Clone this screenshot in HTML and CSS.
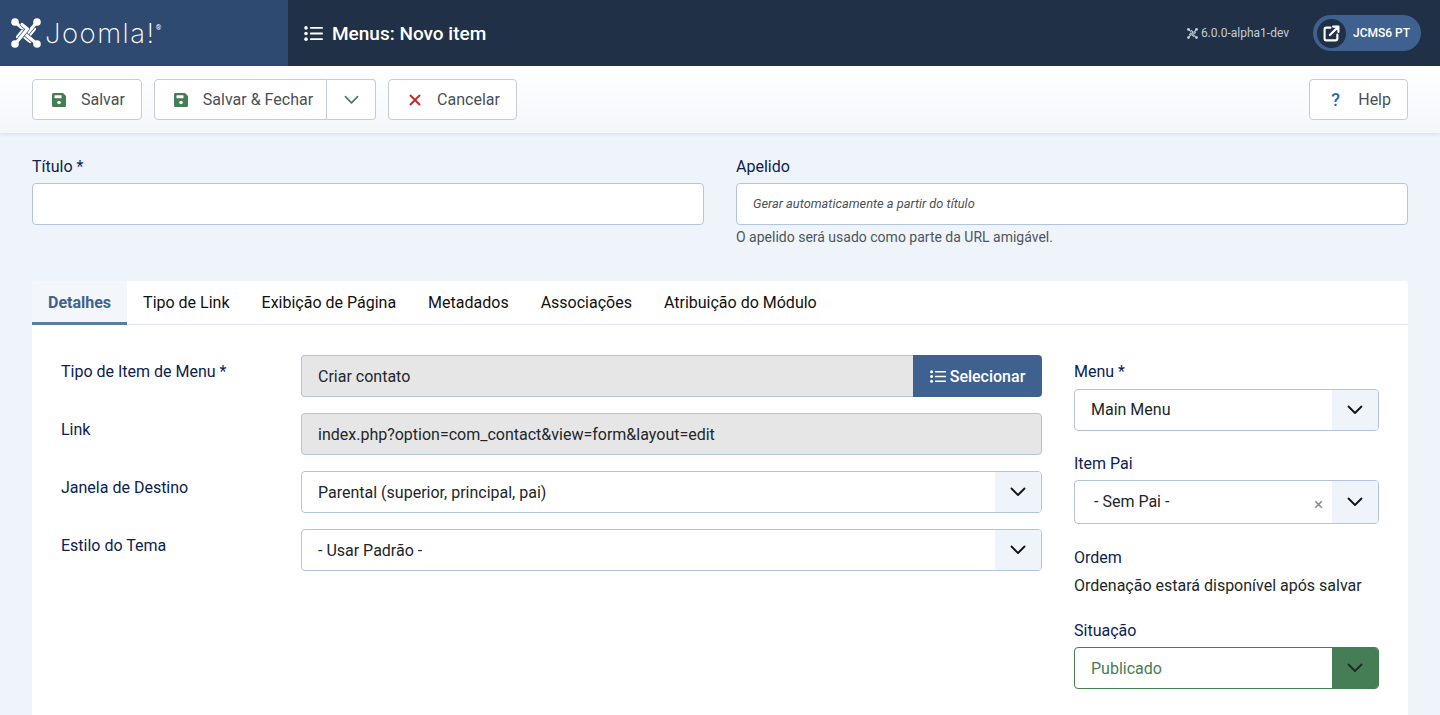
FILE: index.html
```html
<!DOCTYPE html>
<html lang="pt">
<head>
<meta charset="utf-8">
<title>Menus: Novo item</title>
<link rel="stylesheet" href="styles.css">
</head>
<body>
<svg class="defs" width="0" height="0" aria-hidden="true">
  <symbol id="i-list" viewBox="0 0 20 16"><g fill="currentColor"><circle cx="2" cy="2" r="1.9"/><circle cx="2" cy="8" r="1.9"/><circle cx="2" cy="14" r="1.9"/><rect x="6.2" y="1" width="13.8" height="2" rx=".5"/><rect x="6.2" y="7" width="13.8" height="2" rx=".5"/><rect x="6.2" y="13" width="13.8" height="2" rx=".5"/></g></symbol>
  <symbol id="i-save" viewBox="0 0 14 14"><path fill="currentColor" d="M1.6 0h8.9c.4 0 .8.2 1.1.5l1.9 1.9c.3.3.5.7.5 1.1v8.900c0 .9-.7 1.600-1.600 1.600H1.600C.7 14 0 13.300 0 12.400V1.600C0 .7.7 0 1.600 0z"/><rect x="2.500" y="2.200" width="7" height="3" rx=".4" fill="#fff"/><circle cx="7" cy="9.500" r="1.800" fill="#fff"/></symbol>
  <symbol id="i-chev" viewBox="0 0 16 10"><path d="M1.500 1.500 8 8l6.500-6.500" fill="none" stroke="currentColor" stroke-width="1.800" stroke-linecap="round" stroke-linejoin="round"/></symbol>
  <symbol id="i-joomla" viewBox="0 0 30 30">
    <g fill="none" stroke-linecap="round" stroke-linejoin="round">
      <path class="knot-gap" d="M4.500 4.500 19 16.500 23.500 11"/>
      <path class="knot-band" d="M4.500 4.500 19 16.500 23.500 11"/>
      <path class="knot-gap" d="M25.500 4.500 13.500 19 19 23.500"/>
      <path class="knot-band" d="M25.500 4.500 13.500 19 19 23.500"/>
      <path class="knot-gap" d="M25.500 25.500 11 13.500 6.500 19"/>
      <path class="knot-band" d="M25.500 25.500 11 13.500 6.500 19"/>
      <path class="knot-gap" d="M4.500 25.500 16.500 11 11 6.500"/>
      <path class="knot-band" d="M4.500 25.500 16.500 11 11 6.500"/>
    </g>
    <g fill="currentColor">
      <circle cx="4" cy="4" r="3.800"/><circle cx="26" cy="4" r="3.800"/><circle cx="26" cy="26" r="3.800"/><circle cx="4" cy="26" r="3.800"/>
    </g>
  </symbol>
</svg>

<header class="topbar">
  <div class="brand">
    <svg class="brand-icon"><use href="#i-joomla"/></svg>
    <span class="brand-word">Joomla!</span><span class="brand-reg">®</span>
  </div>
  <div class="topbar-main">
    <svg class="title-icon"><use href="#i-list"/></svg>
    <h1 class="page-title">Menus: Novo item</h1>
    <div class="version"><svg class="version-icon"><use href="#i-joomla"/></svg>6.0.0-alpha1-dev</div>
    <div class="site-pill">
      <span class="site-circle">
        <svg class="ext-icon" viewBox="0 0 16 16"><path d="M7 2.500H3.200C2.200 2.500 1.500 3.200 1.500 4.200v8.600c0 1 .7 1.700 1.700 1.700h8.600c1 0 1.700-.7 1.700-1.700V9" fill="none" stroke="currentColor" stroke-width="2" stroke-linecap="round"/><path d="M6.500 9.500 14 2M9.500 1.500h5v5" fill="none" stroke="currentColor" stroke-width="2" stroke-linecap="round" stroke-linejoin="round"/></svg>
      </span>
      <span class="site-name">JCMS6 PT</span>
    </div>
  </div>
</header>

<nav class="toolbar">
  <button class="btn"><svg class="btn-icon save"><use href="#i-save"/></svg>Salvar</button>
  <div class="btn-split">
    <button class="btn split-main"><svg class="btn-icon save"><use href="#i-save"/></svg>Salvar &amp; Fechar</button>
    <button class="btn split-toggle"><svg class="chev-green"><use href="#i-chev"/></svg></button>
  </div>
  <button class="btn"><svg class="btn-icon cancel" viewBox="0 0 12 12"><path d="M1.500 1.500l9 9M10.500 1.500l-9 9" stroke="currentColor" stroke-width="1.900" stroke-linecap="round"/></svg>Cancelar</button>
  <button class="btn help"><span class="help-mark">?</span>Help</button>
</nav>

<main class="content">
  <section class="title-row">
    <div class="title-field">
      <label class="lbl">Título *</label>
      <div class="input"></div>
    </div>
    <div class="title-field">
      <label class="lbl">Apelido</label>
      <div class="input placeholder">Gerar automaticamente a partir do título</div>
      <div class="hint">O apelido será usado como parte da URL amigável.</div>
    </div>
  </section>

  <section class="card">
    <div class="tabs">
      <div class="tab active">Detalhes</div>
      <div class="tab">Tipo de Link</div>
      <div class="tab">Exibição de Página</div>
      <div class="tab">Metadados</div>
      <div class="tab">Associações</div>
      <div class="tab">Atribuição do Módulo</div>
    </div>
    <div class="panel">
      <div class="main-col">
        <div class="row">
          <label class="row-lbl">Tipo de Item de Menu *</label>
          <div class="input-group">
            <div class="input readonly joined">Criar contato</div>
            <button class="select-btn"><svg class="select-icon"><use href="#i-list"/></svg>Selecionar</button>
          </div>
        </div>
        <div class="row">
          <label class="row-lbl">Link</label>
          <div class="input readonly grow">index.php?option=com_contact&amp;view=form&amp;layout=edit</div>
        </div>
        <div class="row">
          <label class="row-lbl">Janela de Destino</label>
          <div class="select grow">Parental (superior, principal, pai)<span class="caret"><svg class="chev"><use href="#i-chev"/></svg></span></div>
        </div>
        <div class="row">
          <label class="row-lbl">Estilo do Tema</label>
          <div class="select grow">- Usar Padrão -<span class="caret"><svg class="chev"><use href="#i-chev"/></svg></span></div>
        </div>
      </div>
      <aside class="side-col">
        <div class="side-group g-menu">
          <label class="lbl">Menu *</label>
          <div class="select">Main Menu<span class="caret"><svg class="chev"><use href="#i-chev"/></svg></span></div>
        </div>
        <div class="side-group g-parent">
          <label class="lbl">Item Pai</label>
          <div class="select fancy">- Sem Pai -<span class="clear">×</span><span class="caret"><svg class="chev"><use href="#i-chev"/></svg></span></div>
        </div>
        <div class="side-group g-order">
          <label class="lbl">Ordem</label>
          <div class="order-text">Ordenação estará disponível após salvar</div>
        </div>
        <div class="side-group g-status">
          <label class="lbl">Situação</label>
          <div class="select published">Publicado<span class="caret"><svg class="chev"><use href="#i-chev"/></svg></span></div>
        </div>
      </aside>
    </div>
  </section>
</main>
</body>
</html>
```
FILE: styles.css
```css
* { box-sizing: border-box; }
html, body { margin: 0; height: 715px; overflow: hidden; }
body { background: #eff4fb; font-family: Roboto, "Liberation Sans", sans-serif; font-size: 16px; color: #22262a; }
.defs { position: absolute; }
button { font: inherit; }

.knot-band { stroke: currentColor; stroke-width: 3.200px; }
.knot-gap { stroke: var(--knot-bg); stroke-width: 4.400px; }

.topbar { display: flex; height: 66px; background: #1f3047; color: #fff; }
.brand { width: 288px; background: #2f4a71; display: flex; align-items: center; padding-left: 11px; }
.brand-icon { width: 30px; height: 30px; color: #fff; --knot-bg: #2f4a71; }
.brand-word { font-family: Inter, sans-serif; font-weight: 200; font-size: 27.5px; margin-left: 4px; letter-spacing: 1.5px; }
.brand-reg { font-size: 7px; align-self: flex-start; margin-top: 24px; }
.topbar-main { flex: 1; display: flex; align-items: center; padding: 0 19px 0 16px; }
.title-icon { width: 19px; height: 15px; color: #fff; margin-right: 9px; }
.page-title { margin: 0; font-size: 19px; font-weight: 500; flex: 1; }
.version { font-size: 12px; color: #c4ccd6; display: flex; align-items: center; margin-right: 24px; }
.version-icon { width: 11px; height: 11px; margin-right: 3px; --knot-bg: #1f3047; }
.site-pill { width: 108px; height: 36px; border-radius: 18px; background: #3e618f; display: flex; align-items: center; padding-left: 3px; }
.site-circle { width: 29px; height: 29px; margin-left: 1px; border-radius: 50%; background: #1f3047; display: flex; align-items: center; justify-content: center; }
.ext-icon { width: 17px; height: 17px; color: #fff; }
.site-name { font-size: 12px; font-weight: 500; margin-left: 7px; }

.toolbar { height: 67px; display: flex; align-items: center; gap: 12px; padding: 0 32px; background: linear-gradient(#fff, #f4f7fb); box-shadow: 0 1px 4px rgba(30, 50, 90, .12); position: relative; }
.btn { height: 41px; background: #fff; border: 1px solid #c5ccd6; border-radius: 4px; color: #495057; display: flex; align-items: center; padding: 0 16px 0 19px; font-size: 16px; }
.btn-icon { width: 14px; height: 14px; margin-right: 15px; }
.save { color: #457d54; }
.cancel { color: #c52827; width: 12px; height: 12px; margin-left: 1px; margin-right: 16px; }
.btn-split { display: flex; }
.split-main { border-radius: 4px 0 0 4px; padding-right: 13px; }
.split-toggle { width: 49px; border-left: 0; border-radius: 0 4px 4px 0; justify-content: center; padding: 0; }
.chev-green { width: 15px; height: 10px; color: #457d54; }
.help { margin-left: auto; padding: 0 16px 0 20px; }
.help-mark { color: #2a69b8; font-weight: 500; font-size: 18px; width: 11px; margin-right: 17px; }

.content { padding: 0 32px; }
.title-row { display: grid; grid-template-columns: 672px 672px; column-gap: 32px; padding-top: 24px; height: 148px; }
.lbl { display: block; color: #0c2250; font-size: 16px; line-height: 19px; margin-bottom: 7px; }
.input { height: 42px; background: #fff; border: 1px solid #b2c4dd; border-radius: 4px; padding: 0 16px; display: flex; align-items: center; font-size: 16px; color: #22262a; }
.placeholder { font-size: 12.8px; font-style: italic; color: #4c5157; padding-bottom: 2px; }
.hint { font-size: 14px; color: #4e545a; margin-top: 4px; line-height: 17px; }

.card { background: #fff; border-radius: 4px 4px 0 0; height: 434px; }
.tabs { display: flex; height: 44px; border-bottom: 1px solid #dfe6f3; }
.tab { padding: 0 16px; line-height: 43px; height: 44px; font-size: 16px; color: #111; }
.tab.active { background: #f3f6fa; color: #3f628f; font-weight: 700; border-bottom: 3px solid #5d7ca5; border-top-left-radius: 4px; }
.panel { display: flex; padding: 30px 29px 0; }
.main-col { width: 981px; display: flex; flex-direction: column; gap: 16px; }
.row { display: flex; align-items: flex-start; }
.row-lbl { width: 240px; color: #0c2250; padding-top: 7px; line-height: 19px; }
.input-group { flex: 1; display: flex; }
.grow { flex: 1; }
.readonly { background: #e6e6e6; }
.joined { flex: 1; border-radius: 4px 0 0 4px; border-right: 0; }
.select-btn { width: 129px; height: 42px; background: #3e618f; color: #fff; border: 0; border-radius: 0 4px 4px 0; font-size: 16px; font-weight: 500; display: flex; align-items: center; justify-content: center; padding: 0; }
.select-icon { width: 16px; height: 13px; margin-right: 4px; }

.select { position: relative; height: 42px; background: #fff; border: 1px solid #b2c4dd; border-radius: 4px; padding: 0 16px; display: flex; align-items: center; font-size: 16px; color: #22262a; }
.caret { position: absolute; top: 0; right: 0; bottom: 0; width: 46px; background: #eff3fa; border-radius: 0 3px 3px 0; display: flex; align-items: center; justify-content: center; color: #111; }
.chev { width: 16px; height: 10px; }
.side-col { margin-left: 32px; width: 305px; margin-top: 7px; }
.g-menu .lbl { margin-bottom: 8px; }
.g-menu .select { padding-bottom: 2px; }
.g-parent { margin-top: 23px; }
.g-order { margin-top: 24px; }
.g-status { margin-top: 26px; }
.fancy { height: 44px; padding-left: 19px; padding-bottom: 2px; }
.clear { position: absolute; right: 55px; top: 13px; color: #888; font-size: 17px; line-height: 20px; }
.g-order .lbl { margin-bottom: 0; }
.order-text { margin-top: 9px; line-height: 19px; color: #22262a; }
.published { border-color: #457d54; color: #457d54; }
.published .caret { background: #457d54; color: #22262a; border-radius: 0 3px 3px 0; }
```
